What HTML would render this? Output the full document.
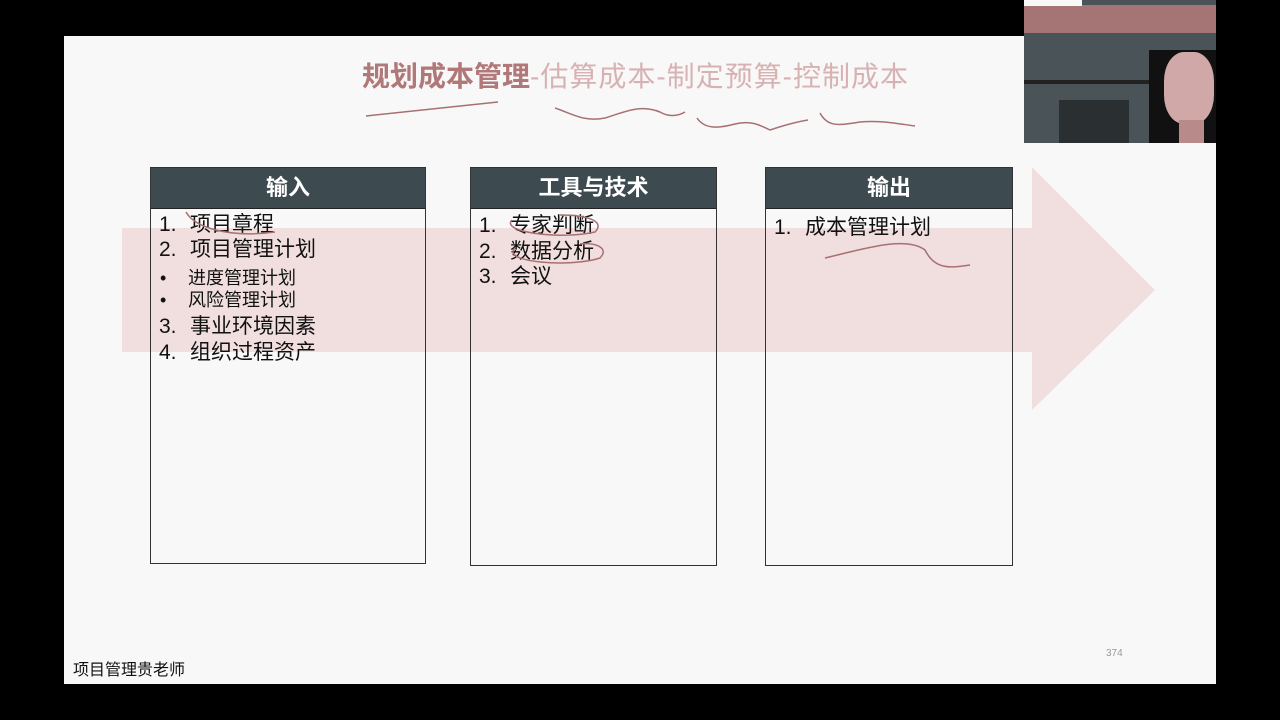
<!DOCTYPE html>
<html><head><meta charset="utf-8"><style>
body{margin:0;width:1280px;height:720px;background:#000;position:relative;overflow:hidden;font-family:"Liberation Sans","Noto Sans CJK SC",sans-serif}
.slide{position:absolute;left:64px;top:36px;width:1152px;height:648px;background:#f8f8f8}
.arrow{position:absolute;left:0;top:0}
.box{position:absolute;top:167px;border:1.5px solid #333}
.hd{height:40px;background:#3d4a4f;color:#fff;font-weight:bold;font-size:22px;text-align:center;line-height:40px;border-bottom:1px solid #222}
.it{position:absolute;font-size:21px;color:#111;white-space:nowrap;line-height:24px}
.it b{font-weight:normal;display:inline-block;width:31px}
.sm{font-size:18px}
.sm b{width:28px}
.abs{position:absolute}
</style></head><body>
<div class="slide"></div>
<svg class="arrow abs" width="1280" height="720" style="left:0;top:0">
<polygon points="122,228 1032,228 1032,167 1155,290 1032,410 1032,352 122,352" fill="#f1dede"/>
</svg>
<div class="box" style="left:150px;width:274px;height:395px"><div class="hd">输入</div></div>
<div class="box" style="left:470px;width:245px;height:397px"><div class="hd">工具与技术</div></div>
<div class="box" style="left:765px;width:246px;height:397px"><div class="hd">输出</div></div>
<div class="it" style="left:159px;top:213px"><b>1.</b>项目章程</div>
<div class="it" style="left:159px;top:238px"><b>2.</b>项目管理计划</div>
<div class="it sm" style="left:160px;top:266px"><b>•</b>进度管理计划</div>
<div class="it sm" style="left:160px;top:288px"><b>•</b>风险管理计划</div>
<div class="it" style="left:159px;top:315px"><b>3.</b>事业环境因素</div>
<div class="it" style="left:159px;top:341px"><b>4.</b>组织过程资产</div>
<div class="it" style="left:479px;top:214px"><b>1.</b>专家判断</div>
<div class="it" style="left:479px;top:240px"><b>2.</b>数据分析</div>
<div class="it" style="left:479px;top:265px"><b>3.</b>会议</div>
<div class="it" style="left:774px;top:216px"><b>1.</b>成本管理计划</div>
<div class="abs" style="left:362px;top:55px;font-size:28px;font-weight:bold;color:#b07878;white-space:nowrap">规划成本管理<span style="font-weight:normal;color:#d8b2b2;letter-spacing:1px">-估算成本-制定预算-控制成本</span></div>
<svg class="abs" width="1280" height="720" style="left:0;top:0" fill="none" stroke="#a87070" stroke-width="1.5">
<path d="M366,116 L498,102"/>
<path d="M555,108 C575,115 585,122 605,118 C625,112 640,104 660,112 C670,118 680,115 685,112"/>
<path d="M697,118 C705,130 720,128 735,124 C750,120 760,125 770,130 C785,125 795,122 808,120"/>
<path d="M820,113 C828,128 840,125 860,122 C880,120 900,124 915,126"/>
<path d="M186,212 C195,228 230,238 275,232"/>
<path d="M512,220 C500,232 560,240 595,232 C605,222 590,215 560,215"/>
<path d="M515,248 C500,262 570,268 600,258 C610,248 595,242 580,244"/>
<path d="M825,258 C860,250 905,235 925,250 C935,270 950,268 970,265"/>
</svg>
<div class="abs" style="left:73px;top:656px;font-size:16px;color:#111">项目管理贵老师</div>
<div class="abs" style="left:1106px;top:648px;font-size:10px;color:#999">374</div>
<div class="abs" style="left:1024px;top:0;width:192px;height:143px;background:#4a5357">
<div class="abs" style="left:0;top:5px;width:192px;height:28px;background:#a57575"></div>
<div class="abs" style="left:0;top:0;width:58px;height:6px;background:#f8f8f8"></div>
<div class="abs" style="left:0;top:80px;width:192px;height:4px;background:#222"></div>
<div class="abs" style="left:35px;top:100px;width:70px;height:43px;background:#2a2f32"></div>
<div class="abs" style="left:125px;top:50px;width:67px;height:93px;background:#111"></div>
<div class="abs" style="left:140px;top:52px;width:50px;height:72px;background:#d0a8a8;border-radius:40%"></div>
<div class="abs" style="left:155px;top:120px;width:25px;height:23px;background:#b88a8a"></div>
</div>
</body></html>
